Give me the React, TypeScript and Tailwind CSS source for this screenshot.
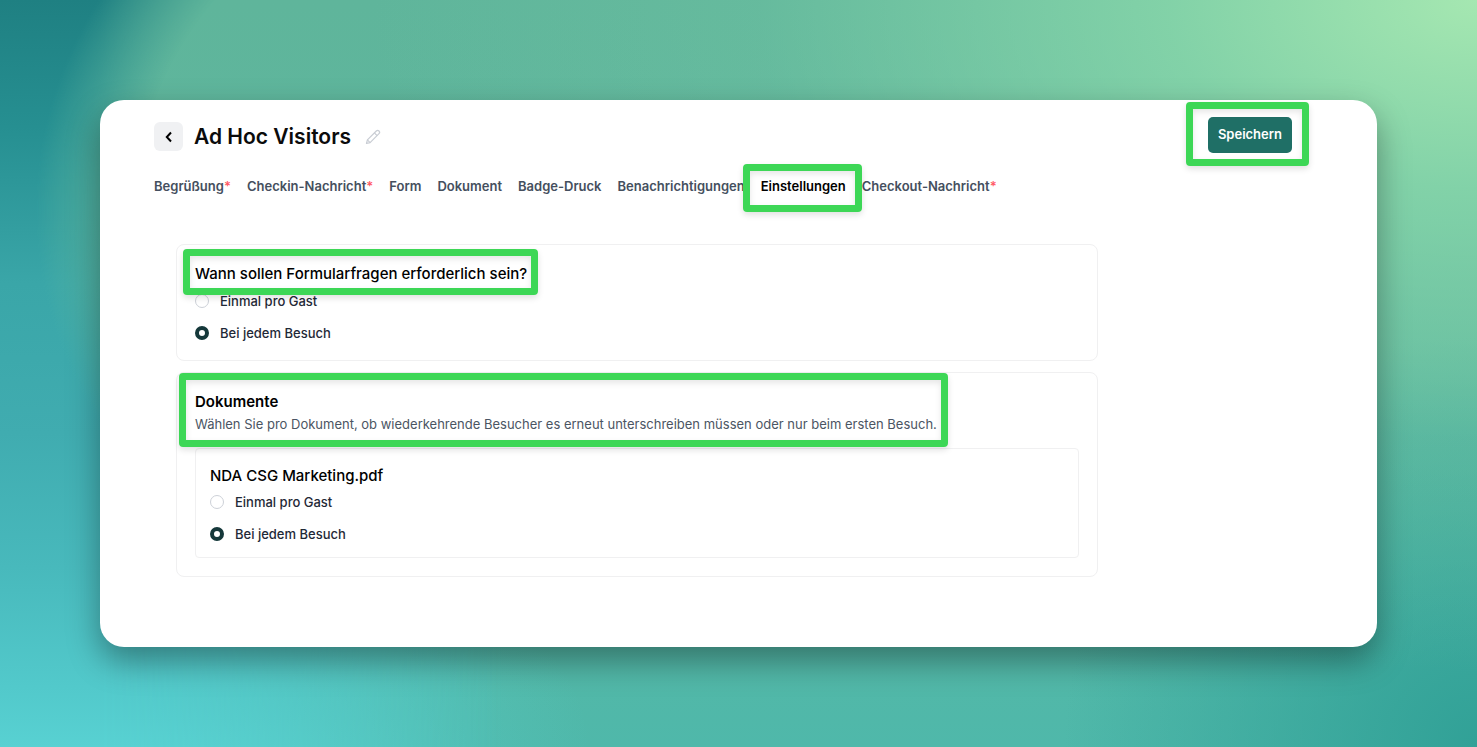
import React, { useState } from "react";

const tabs = [
  { label: "Begrüßung", required: true },
  { label: "Checkin-Nachricht", required: true },
  { label: "Form" },
  { label: "Dokument" },
  { label: "Badge-Druck" },
  { label: "Benachrichtigungen" },
  { label: "Einstellungen", active: true },
  { label: "Checkout-Nachricht", required: true },
];

const options = [
  { value: "once", label: "Einmal pro Gast" },
  { value: "every", label: "Bei jedem Besuch" },
];

// Green marker frame, laid over the element it points at
const Highlight = ({ className }: { className: string }) => (
  <span
    aria-hidden
    className={`pointer-events-none absolute z-10 rounded border-[7px] border-[#3dd756] shadow-[0_3px_6px_rgba(0,0,0,0.12),inset_0_3px_6px_rgba(0,0,0,0.1)] ${className}`}
  />
);

const RadioOptions = ({ name }: { name: string }) => {
  const [selected, setSelected] = useState("every");

  return (
    <div className="flex flex-col gap-3">
      {options.map((option) => (
        <label
          key={option.value}
          className="flex items-center gap-[11px] text-[13px] leading-5 font-medium text-[#1f2937]"
        >
          <input
            type="radio"
            name={name}
            value={option.value}
            checked={selected === option.value}
            onChange={() => setSelected(option.value)}
            className="size-[14px] shrink-0 appearance-none rounded-full border border-[#cdd1d8] bg-white checked:border-4 checked:border-[#15383a]"
          />
          {option.label}
        </label>
      ))}
    </div>
  );
};

// Soft teal and mint backdrop behind the card
const Backdrop = () => (
  <div
    aria-hidden
    className="absolute inset-0 -z-10 bg-[#5fb59c] bg-[radial-gradient(ellipse_75%_90%_at_100%_0%,#a5e7b1_0%,#8bd9abcc_28%,#7acba540_65%,transparent_100%),radial-gradient(ellipse_40%_36%_at_0%_100%,#5ad5d5_0%,transparent_100%),radial-gradient(ellipse_28%_55%_at_100%_100%,#31a197_0%,transparent_100%),linear-gradient(to_bottom,#5fb59b_0%,#5db79f_50%,#4fb8aa_100%)]"
  >
    <div className="h-full w-[34%] bg-[linear-gradient(to_bottom,#1f8082_0%,#268f91_17%,#3aa6a8_38%,#40acb0_58%,#48b9bc_76%,#52c9cb_92%,#58d1d2_100%)] [mask-image:radial-gradient(ellipse_450px_390px_at_540px_210px,transparent_90%,black_112%),linear-gradient(to_right,black_20%,transparent)] [mask-composite:intersect]" />
  </div>
);

const App = () => {
  return (
    <div className="relative isolate flex min-h-screen p-[100px] font-['Inter',sans-serif]">
      <Backdrop />

      <main className="flex-1 rounded-3xl bg-white pr-[85px] pb-[70px] pl-[54px] shadow-[0_14px_32px_rgba(0,0,0,0.36)]">
        <header className="flex items-start justify-between pt-[17px]">
          <div className="flex items-center pt-[5px]">
            <button
              type="button"
              aria-label="Zurück"
              className="flex size-[29px] items-center justify-center rounded-md bg-[#f0f1f3] text-black"
            >
              <svg viewBox="0 0 12 12" className="size-3" fill="none" stroke="currentColor" strokeWidth="2">
                <path d="M8 1.5 3.8 6 8 10.5" />
              </svg>
            </button>
            <h1 className="ml-[11px] text-[21px] leading-7 font-semibold text-[#0b0b0b]">Ad Hoc Visitors</h1>
            <button type="button" aria-label="Bearbeiten" className="ml-[14px] text-[#c9cdd4]">
              <svg viewBox="0 0 16 16" className="size-4" fill="none" stroke="currentColor" strokeWidth="1.2" strokeLinejoin="round">
                <path d="M1.5 14.5 2.4 10.9 11.3 2a1.9 1.9 0 0 1 2.7 2.7L5.1 13.6Z" />
                <path d="M9.4 3.9 12.1 6.6M2.4 10.9 5.1 13.6" />
              </svg>
            </button>
          </div>

          <div className="relative">
            <button
              type="button"
              className="h-9 rounded-[5px] bg-[#1f6f66] px-[10px] text-[13px] font-semibold text-white"
            >
              Speichern
            </button>
            <Highlight className="-top-[15px] -right-[17px] -bottom-[13px] -left-[22px]" />
          </div>
        </header>

        <nav className="mt-[23px] flex gap-4 text-[13px] leading-5 font-semibold text-[#454f5e]">
          {tabs.map((tab) => (
            <a
              key={tab.label}
              href="#"
              aria-current={tab.active ? "page" : undefined}
              className={`relative whitespace-nowrap ${tab.active ? "text-black" : ""}`}
            >
              {tab.label}
              {tab.required && <span className="text-[#ff5a66]">*</span>}
              {tab.active && <Highlight className="-top-3 -right-4 -bottom-4 -left-[18px]" />}
            </a>
          ))}
        </nav>

        <div className="mt-12 ml-[22px] flex max-w-[922px] flex-col gap-[11px]">
          <section className="rounded-lg border border-[#f0f0f1] px-[18px] pt-[17px] pb-[17px]">
            <div className="relative w-fit">
              <h2 className="text-[15px] leading-6 font-medium text-black">
                Wann sollen Formularfragen erforderlich sein?
              </h2>
              <Highlight className="-top-[13px] -right-[11px] -bottom-[9px] -left-3" />
            </div>
            <div className="mt-[5px]">
              <RadioOptions name="form-questions" />
            </div>
          </section>

          <section className="rounded-lg border border-[#f0f0f1] p-[18px] pt-[17px]">
            <div className="relative w-fit">
              <h2 className="text-[15px] leading-6 font-semibold text-black">Dokumente</h2>
              <p className="text-[13px] leading-5 text-[#4b5563]">
                Wählen Sie pro Dokument, ob wiederkehrende Besucher es erneut unterschreiben müssen oder nur beim ersten
                Besuch.
              </p>
              <Highlight className="-top-[17px] -right-[11px] -bottom-[13px] -left-4" />
            </div>

            <div className="mt-[14px] rounded border border-[#f0f0f1] px-[14px] pt-[15px] pb-[13px]">
              <h3 className="text-[15px] leading-6 font-medium text-black">NDA CSG Marketing.pdf</h3>
              <div className="mt-1">
                <RadioOptions name="nda-document" />
              </div>
            </div>
          </section>
        </div>
      </main>
    </div>
  );
};

export default App;
